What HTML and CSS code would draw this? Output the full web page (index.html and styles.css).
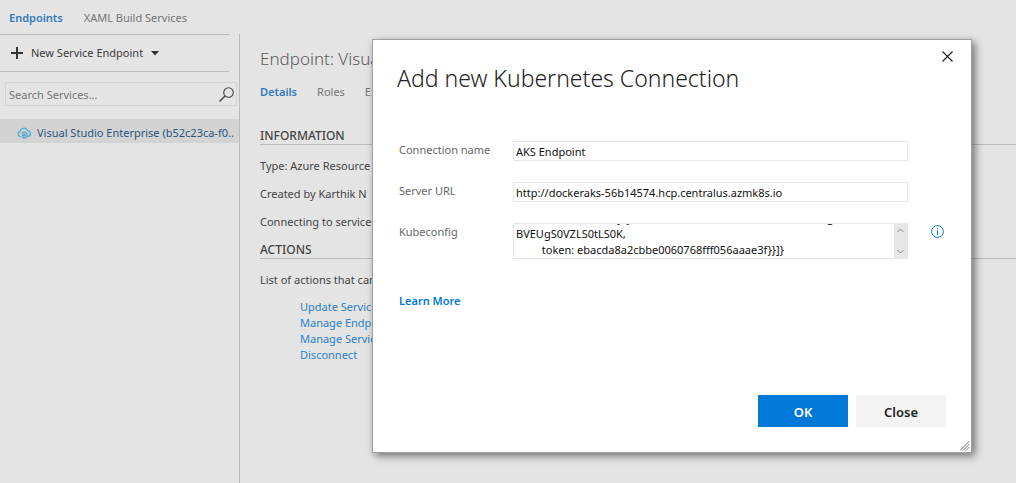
FILE: index.html
```html
<!DOCTYPE html>
<html lang="en">
<head>
<meta charset="utf-8">
<title>Service Endpoints</title>
<link rel="stylesheet" href="styles.css">
</head>
<body>
<nav class="hub-tabs">
  <a class="tab active" href="#endpoints">Endpoints</a>
  <a class="tab" href="#xaml">XAML Build Services</a>
</nav>
<div class="workspace">
  <aside class="sidebar">
    <div class="toolbar">
      <button class="new-endpoint" type="button">
        <svg width="12" height="12" viewBox="0 0 12 12" aria-hidden="true"><path d="M6 0v12M0 6h12" stroke="#333" stroke-width="2"/></svg>
        <span>New Service Endpoint</span>
        <svg width="8" height="5" viewBox="0 0 8 5" aria-hidden="true"><path d="M0 0h8L4 4.500z" fill="#333"/></svg>
      </button>
    </div>
    <div class="search">
      <input type="text" placeholder="Search Services..." aria-label="Search Services">
      <svg width="15" height="15" viewBox="0 0 15 15" fill="none" stroke="#444" aria-hidden="true"><circle cx="9.500" cy="5.500" r="4.800" stroke-width="1.100"/><path d="M6 9L.5 14.500" stroke-width="1.400"/></svg>
    </div>
    <a class="service" href="#service">
      <svg width="15" height="12" viewBox="0 0 15 12" fill="none" stroke="#45a9d3" stroke-width="1.200" aria-hidden="true"><path d="M4 9.500H3.200A2.500 2.500 0 0 1 3 4.600 4 4 0 0 1 10.600 3.600 3 3 0 0 1 11.500 9.400H10.500"/><path d="M4.600 6.700A3 3 0 1 1 4.600 9.500"/><path d="M5 8.200h3"/><circle cx="7.200" cy="8.200" r="1"/></svg>
      <span>Visual Studio Enterprise (b52c23ca-f0..</span>
    </a>
  </aside>
  <main class="details">
    <h1 class="title">Endpoint: Visual</h1>
    <nav class="detail-tabs">
      <a class="tab active" href="#details">Details</a>
      <a class="tab" href="#roles">Roles</a>
      <a class="tab" href="#history">Execution</a>
    </nav>
    <h2 class="heading">INFORMATION</h2>
    <p class="line">Type: Azure Resource</p>
    <p class="line">Created by Karthik N</p>
    <p class="line">Connecting to service</p>
    <h2 class="heading">ACTIONS</h2>
    <p class="line">List of actions that can</p>
    <ul class="actions">
      <li><a href="#update">Update Service</a></li>
      <li><a href="#manage">Manage Endpoint</a></li>
      <li><a href="#principal">Manage Service</a></li>
      <li><a href="#disconnect">Disconnect</a></li>
    </ul>
  </main>
</div>

<section class="dialog" role="dialog" aria-labelledby="dialog-title">
  <header class="dialog-header">
    <h2 id="dialog-title">Add new Kubernetes Connection</h2>
    <button class="dismiss" type="button" aria-label="Dismiss">
      <svg width="11" height="11" viewBox="0 0 11 11" aria-hidden="true"><path d="M.5.5l10 10M10.500.5l-10 10" stroke="#222" stroke-width="1.200"/></svg>
    </button>
  </header>
  <form class="form">
    <label for="name">Connection name</label>
    <input id="name" class="field" type="text" value="AKS Endpoint">
    <label for="url">Server URL</label>
    <input id="url" class="field" type="text" value="http://dockeraks-56b14574.hcp.centralus.azmk8s.io">
    <label for="config">Kubeconfig</label>
    <div class="field scroll-field">
      <textarea id="config" spellcheck="false">LS0tRUNBVEUtLS0KjZjS0K4TZWZWHNkWTFVbDRTa3R0VFZWgWNX3
BVEUgS0VZLS0tLS0K,
         token: ebacda8a2cbbe0060768fff056aaae3f}}]}</textarea>
      <div class="scrollbar" aria-hidden="true">
        <svg width="7" height="5" viewBox="0 0 7 5"><path d="M.5 4l3-3 3 3"/></svg>
        <svg width="7" height="5" viewBox="0 0 7 5"><path d="M.5 1l3 3 3-3"/></svg>
      </div>
    </div>
    <button class="info" type="button" aria-label="Kubeconfig help">
      <svg width="13" height="13" viewBox="0 0 13 13" fill="none" stroke="#0078d7" aria-hidden="true"><circle cx="6.500" cy="6.500" r="5.900"/><path d="M6.500 5.300v4.500M6.500 3v1.300"/></svg>
    </button>
  </form>
  <a class="learn" href="#learn">Learn More</a>
  <footer class="buttons">
    <button class="button primary" type="button">OK</button>
    <button class="button" type="button">Close</button>
  </footer>
  <svg class="grip" width="10" height="10" viewBox="0 0 10 10" stroke="#777" aria-hidden="true"><path d="M0 9.500L9.500 0M3 9.500L9.500 3M6 9.500L9.500 6"/></svg>
</section>
<script src="script.js"></script>
</body>
</html>
```

FILE: script.js
```js
const config = document.getElementById("config");
config.scrollTop = config.scrollHeight;
```

FILE: styles.css
```css
* { box-sizing: border-box; }
body {
  margin: 0;
  min-height: 100vh;
  display: flex;
  flex-direction: column;
  position: relative;
  overflow: hidden;
  background: #e4e4e4;
  color: #444;
  font: 11px/16px "Segoe UI", "Noto Sans", "Open Sans", sans-serif;
}
a { text-decoration: none; }
h1, h2, p, ul { margin: 0; padding: 0; font-weight: 400; }
button, input, textarea { font: inherit; color: inherit; border: 0; padding: 0; margin: 0; background: none; outline: 0; }
svg { flex: none; display: block; }
.tab { color: #757575; }
.tab.active { color: #3079bc; font-weight: 600; }
.hub-tabs { display: flex; gap: 21px; height: 34px; padding: 10px 9px 0; }
.workspace { flex: 1; display: flex; }
.sidebar { flex: 0 0 240px; min-width: 0; border-right: 1px solid #b9bbbb; }
.toolbar { width: 229px; height: 38px; border: solid #b9bbbb; border-width: 1px 0; display: flex; align-items: center; padding-left: 11px; }
.new-endpoint { display: flex; align-items: center; gap: 8px; color: #3c3c3c; }
.search { display: flex; align-items: center; height: 24px; margin: 10px 2px 13px 5px; border: 1px solid #d3d3d3; padding: 0 2px 0 3px; }
.search input { flex: 1; min-width: 0; padding-top: 2px; }
.search input::placeholder { color: #757575; opacity: 1; }
.service { display: flex; align-items: center; gap: 5px; height: 24px; padding: 3px 0 0 17px; background: #d3d3d3; color: #29557f; white-space: nowrap; overflow: hidden; }
.details { flex: 1; min-width: 0; padding: 13px 0 0 20px; white-space: nowrap; }
.title { font-size: 17px; line-height: 24px; font-weight: 300; color: #5c5c5c; }
.detail-tabs { display: flex; gap: 20px; padding: 13px 0 27px; }
.heading { height: 18px; border-bottom: 1px solid #b9bbbb; font-size: 12px; font-weight: 500; line-height: 18px; }
.line { padding-top: 12px; }
.line + .heading { margin-top: 11px; }
.heading + .line { padding-top: 13px; }
.actions { list-style: none; padding: 11px 0 0 40px; }
.actions a { color: #2c80c4; }

.dialog {
  position: absolute;
  top: 39px;
  right: 44px;
  width: 600px;
  padding: 0 25px 25px 26px;
  background: #fff;
  border: 1px solid #a0a0a0;
  box-shadow: 3px 3px 8px rgba(0, 0, 0, .5);
}
.dialog-header { display: flex; justify-content: space-between; align-items: flex-start; margin: 0 -7px 47px -2px; }
.dialog-header h2 { padding-top: 22px; font-size: 23px; line-height: 32px; font-weight: 300; color: #222; }
.dismiss { padding: 11px 0; }
.form { display: grid; grid-template-columns: 98px 1fr 14px; column-gap: 16px; row-gap: 21px; align-items: start; padding-right: 1px; }
.form label { grid-column: 1; padding-top: 1px; color: #666; white-space: nowrap; }
.field { grid-column: 2; margin-right: 7px; border: 1px solid #e5e5e5; color: #111; }
input.field { height: 20px; padding: 0 2px; }
.scroll-field { display: flex; height: 36px; }
.scroll-field textarea { flex: 1; min-width: 0; padding: 0 2px; resize: none; overflow: hidden; }
.scrollbar { flex: 0 0 13px; display: flex; flex-direction: column; justify-content: space-between; align-items: center; padding: 4px 0; background: #e6e6e6; fill: none; stroke: #888; }
.info { padding-top: 2px; }
.learn { display: inline-block; margin-top: 34px; color: #0078d7; font-weight: 600; }
.buttons { display: flex; justify-content: flex-end; gap: 8px; margin-top: 86px; }
.button { width: 90px; height: 32px; padding-top: 1px; background: #f3f3f3; color: #222; font-size: 13px; font-weight: 600; }
.button.primary { background: #0078d7; color: #fff; }
.grip { position: absolute; right: 1px; bottom: 1px; }
```
